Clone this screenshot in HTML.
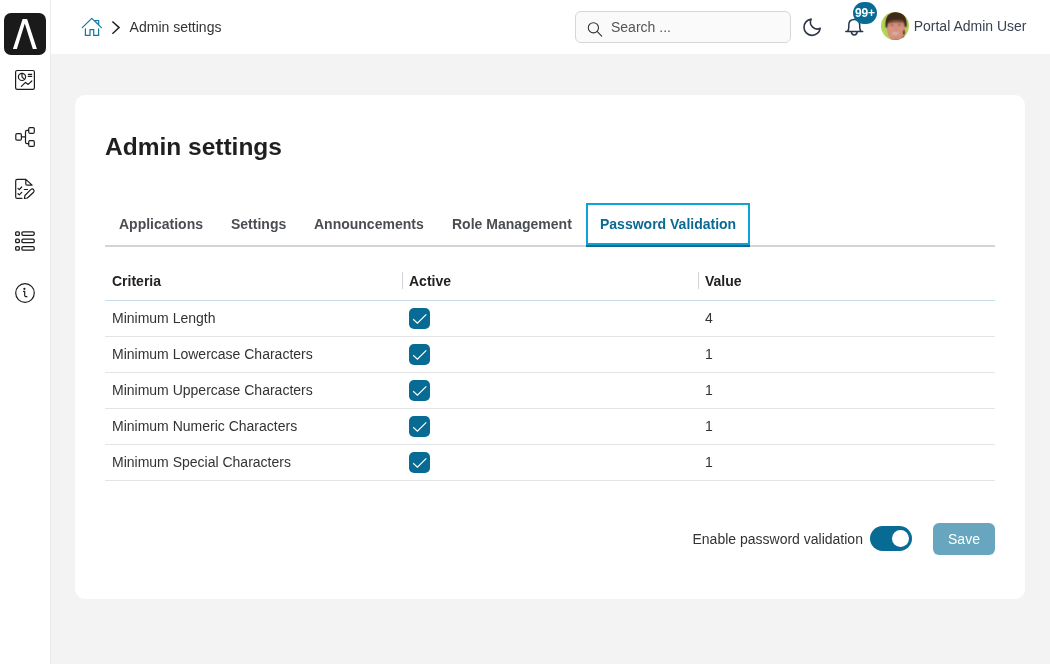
<!DOCTYPE html>
<html><head><meta charset="utf-8">
<style>
*{box-sizing:border-box;margin:0;padding:0}
html,body{width:1050px;height:664px;overflow:hidden;background:#f3f3f3;font-family:"Liberation Sans",sans-serif;color:#333}
#wrap{position:absolute;left:0;top:0;width:1050px;height:664px;will-change:transform}
#top{position:absolute;left:0;top:0;width:1050px;height:54px;background:#fff}
#side{position:absolute;left:0;top:0;width:51px;height:664px;background:#fff;border-right:1px solid #ebebeb}
#logo{position:absolute;left:4px;top:13px;width:42px;height:42px;border-radius:7px;background:#1a1a1a}
#icons{position:absolute;left:0;top:0;width:1050px;height:664px;pointer-events:none}
#crumb{position:absolute;left:129.6px;top:19px;font-size:14px;color:#333;white-space:nowrap}
#search{position:absolute;left:575px;top:11px;width:216px;height:32px;border:1px solid #d3d6da;border-radius:6px;background:#fafafa}
#search span{position:absolute;left:35px;top:7px;font-size:14px;color:#555;white-space:nowrap}
#user{position:absolute;left:913.7px;top:18px;font-size:14px;color:#394252;white-space:nowrap}
#badge{z-index:5;position:absolute;left:853px;top:2px;width:24px;height:22px;border-radius:11px;background:#076b94;color:#fff;font-size:12px;font-weight:bold;text-align:center;line-height:22px;letter-spacing:-0.15px}
#card{position:absolute;left:75px;top:95px;width:950px;height:504px;background:#fff;border-radius:10px}
h1{position:absolute;left:30px;top:38px;font-size:24.5px;font-weight:bold;color:#1f1f1f;white-space:nowrap}
#tabs{position:absolute;left:30px;top:108px;width:890px;height:44px;border-bottom:2px solid #d2d4d9}
.tab{position:absolute;top:13px;font-size:14px;font-weight:bold;color:#4a4d52;white-space:nowrap}
#atab{position:absolute;left:481px;top:0;width:164px;height:44px;border-bottom:2px solid #0b6a93}
#atab b{position:absolute;left:0;top:0;width:164px;height:42px;border:2px solid #0ea2d8}
#atab span{position:absolute;left:14px;top:13px;font-size:14px;font-weight:bold;color:#0b6a93;white-space:nowrap}
table{position:absolute;left:30px;top:167px;width:890px;border-collapse:collapse;table-layout:fixed}
th{height:38px;text-align:left;font-size:14px;font-weight:bold;color:#222;padding-left:7px;border-bottom:1px solid #c5dfea;position:relative}
td{height:36px;font-size:14px;color:#333;padding-left:7px;border-bottom:1px solid #e4e4e4;vertical-align:middle}
th i{position:absolute;left:0;top:10px;width:1px;height:17px;background:#d0d4d9}
.cb{display:block;width:21px;height:21px;border-radius:5px;background:#076b94;position:relative;left:0}
.cb svg{position:absolute;left:0;top:0}
#lbl{position:absolute;left:617.5px;top:436px;font-size:14px;color:#333;white-space:nowrap}
#tog{position:absolute;left:795px;top:431px;width:42px;height:25px;border-radius:13px;background:#076b94}
#tog i{position:absolute;left:21.5px;top:3.8px;width:17.5px;height:17.5px;border-radius:50%;background:#fff}
#save{position:absolute;left:858px;top:428px;width:62px;height:32px;border-radius:6px;background:#68a6bf;color:#fff;font-size:14px;text-align:center;line-height:32px}
</style></head><body>
<div id="wrap">
<div id="top">
<div id="crumb">Admin settings</div>
<div id="search"><span>Search ...</span></div>
<div id="badge">99+</div>
<div id="user">Portal Admin User</div>
</div>
<div id="side">
<div id="logo"><svg width="42" height="42" viewBox="0 0 42 42"><polygon points="8.9,36 18.6,6 23.1,6 32.9,36 28.8,36 20.8,10.6 12.9,36" fill="#fff"/></svg></div>
</div>
<div id="card">
<h1>Admin settings</h1>
<div id="tabs">
<span class="tab" style="left:14px">Applications</span>
<span class="tab" style="left:126px">Settings</span>
<span class="tab" style="left:209px">Announcements</span>
<span class="tab" style="left:347px">Role Management</span>
<div id="atab"><b></b><span>Password Validation</span></div>
</div>
<table>
<colgroup><col style="width:297px"><col style="width:296px"><col></colgroup>
<tr><th>Criteria</th><th><i></i>Active</th><th><i></i>Value</th></tr>
<tr><td>Minimum Length</td><td><span class="cb"><svg width="21" height="21"><path d="M4.2 11.3 L8.4 15.2 L17.3 6.4" fill="none" stroke="#fff" stroke-width="1.2"/></svg></span></td><td>4</td></tr>
<tr><td>Minimum Lowercase Characters</td><td><span class="cb"><svg width="21" height="21"><path d="M4.2 11.3 L8.4 15.2 L17.3 6.4" fill="none" stroke="#fff" stroke-width="1.2"/></svg></span></td><td>1</td></tr>
<tr><td>Minimum Uppercase Characters</td><td><span class="cb"><svg width="21" height="21"><path d="M4.2 11.3 L8.4 15.2 L17.3 6.4" fill="none" stroke="#fff" stroke-width="1.2"/></svg></span></td><td>1</td></tr>
<tr><td>Minimum Numeric Characters</td><td><span class="cb"><svg width="21" height="21"><path d="M4.2 11.3 L8.4 15.2 L17.3 6.4" fill="none" stroke="#fff" stroke-width="1.2"/></svg></span></td><td>1</td></tr>
<tr><td>Minimum Special Characters</td><td><span class="cb"><svg width="21" height="21"><path d="M4.2 11.3 L8.4 15.2 L17.3 6.4" fill="none" stroke="#fff" stroke-width="1.2"/></svg></span></td><td>1</td></tr>
</table>
<div id="lbl">Enable password validation</div>
<div id="tog"><i></i></div>
<div id="save">Save</div>
</div>
<svg id="icons" width="1050" height="664" viewBox="0 0 1050 664" fill="none" stroke-linecap="round" stroke-linejoin="round">
<!-- home -->
<g stroke="#0e7aa3" stroke-width="1.2">
<path d="M82.3 27.6 L91.75 18.4 L101.4 27.6"/>
<path d="M85.4 28.8 V35.4 H90 V29.6 H93.7 V35.4 H98.6 V28.8" stroke-linejoin="miter"/>
<path d="M94.9 20.5 H98.7 V24.6" /><path d="M96.2 21.6 L97.9 23.6" stroke-width="0.8"/>
</g>
<path d="M112.4 21.5 L119.1 27.6 L112.4 33.8" stroke="#222" stroke-width="1.5" stroke-linecap="butt" stroke-linejoin="miter"/>
<!-- sidebar icons -->
<g stroke="#1c1c1c" stroke-width="1.2">
<rect x="15.6" y="70.5" width="18.8" height="18.8" rx="1.6"/>
<circle cx="22" cy="76.9" r="3.6"/>
<path d="M22 73.3 V76.9 L24.6 79.4"/>
<path d="M28.3 74.3 H31.7 M28.3 76.4 H31.7"/>
<path d="M21.4 86.4 L25.5 82.4 L28.2 84.4 L31.8 81"/>

<rect x="15.8" y="133.7" width="5.6" height="6.5" rx="1.2"/>
<rect x="28.7" y="127.6" width="5.6" height="5.7" rx="1.2"/>
<rect x="28.7" y="140.7" width="5.6" height="5.7" rx="1.2"/>
<path d="M21.6 136.9 H25.5 M28.6 130.4 H27 Q25.5 130.4 25.5 132 V142 Q25.5 143.6 27 143.6 H28.6"/>

<path d="M21.9 198.4 H17.2 Q15.7 198.4 15.7 196.9 V180.9 Q15.7 179.4 17.2 179.4 H25.8 L32.1 185.1 H27 Q25.8 185.1 25.8 183.9 V179.4"/>
<path d="M18 188.4 L19.3 189.6 L21.7 187 M18 193.7 L19.3 194.9 L21.7 192.3 M24.3 189.5 H27.6"/>
<path d="M24.4 198.5 L24.9 195.5 L31 189.4 Q32.4 188.3 33.6 189.6 Q34.7 190.9 33.6 192.2 L27.4 198 Z"/>

<g stroke-width="1.3">
<rect x="15.7" y="231.8" width="3.6" height="3.5" rx="0.9"/><rect x="21.9" y="231.8" width="12.3" height="3.5" rx="1.3"/>
<rect x="15.7" y="239.2" width="3.6" height="3.5" rx="0.9"/><rect x="21.9" y="239.2" width="12.3" height="3.5" rx="1.3"/>
<rect x="15.7" y="246.7" width="3.6" height="3.5" rx="0.9"/><rect x="21.9" y="246.7" width="12.3" height="3.5" rx="1.3"/>
</g>

<circle cx="25" cy="293" r="9.3"/>
<path d="M23.5 291.4 H24.7 V295.3 Q24.7 296.8 26.9 296.7"/>
<circle cx="24.4" cy="288.8" r="0.5" fill="#1c1c1c"/>
</g>
<!-- search -->
<g stroke="#333" stroke-width="1.1">
<circle cx="593.4" cy="27.8" r="5.1"/>
<path d="M597.3 31.6 L601.7 36.2"/>
</g>
<!-- moon / bell -->
<g stroke="#2d3648" stroke-width="1.6">
<path d="M811.2 19.1 A8.15 8.15 0 1 0 820.2 28.3 A6.8 6.8 0 0 1 811.2 19.1 Z"/>
</g>
<g stroke="#2d3648" stroke-width="1.5">
<path d="M845.8 31.5 H862.7 M847.6 31.3 Q848.8 29.6 848.8 27 V25 Q848.8 19.4 854.2 19.4 Q859.7 19.4 859.7 25 V27 Q859.7 29.6 860.9 31.3"/>
<path d="M851.4 32.2 Q851.7 34.9 854.2 34.9 Q856.8 34.9 857.1 32.2"/>
</g>
<!-- avatar -->
<defs><clipPath id="av"><circle cx="895" cy="26" r="14"/></clipPath><filter id="bl"><feGaussianBlur stdDeviation="0.8"/></filter></defs>
<g clip-path="url(#av)" stroke="none">
<rect x="880" y="11" width="30" height="30" fill="#b3d659"/>
<g>
<path d="M886.5 26 Q886 20 890 17 L902 17 Q906 20 905.5 27 L904.5 33 Q903 38 899 40.5 L892 41 Q888.5 37 887.5 32 Z" fill="#d4917c"/>
<path d="M890 41.5 Q895 38.5 901 40 L903 36 L906 36 L904 42 Z" fill="#8a5a44"/>
<path d="M885.8 27.5 Q884.8 19 888.5 15 Q892 11.8 896 12.2 Q902 12.5 905 17 Q907.3 21.5 906.3 27.5 L904.3 26 Q903.8 22.5 902 20.8 Q898 21.6 894.5 21.3 Q891 21.6 889 22.2 Q887.6 24.5 887.3 27.5 Z" fill="#402b1c"/>
<path d="M889 22.2 Q892 19.5 896 20 Q900 19.6 902.5 21 L902 23 Q896 22 889.5 23.6 Z" fill="#7a5136"/>
<ellipse cx="892" cy="25.2" rx="1.6" ry="0.7" fill="#7b5b55"/>
<ellipse cx="899.3" cy="25" rx="1.6" ry="0.7" fill="#7b5b55"/>
<ellipse cx="891" cy="29" rx="2.2" ry="1.8" fill="#de9685"/>
<ellipse cx="900.5" cy="28.7" rx="2.2" ry="1.8" fill="#de9685"/>
<ellipse cx="895.3" cy="33.4" rx="3.6" ry="1.6" fill="#dcaea6"/>
<rect x="903" y="30.5" width="1.6" height="4" fill="#3b2a1d"/>
</g>
<g filter="url(#bl)" opacity="0.65">
<path d="M886.5 26 Q886 20 890 17 L902 17 Q906 20 905.5 27 L904.5 33 Q903 38 899 40.5 L892 41 Q888.5 37 887.5 32 Z" fill="#d4917c"/>
<path d="M890 41.5 Q895 38.5 901 40 L903 36 L906 36 L904 42 Z" fill="#8a5a44"/>
<path d="M885.8 27.5 Q884.8 19 888.5 15 Q892 11.8 896 12.2 Q902 12.5 905 17 Q907.3 21.5 906.3 27.5 L904.3 26 Q903.8 22.5 902 20.8 Q898 21.6 894.5 21.3 Q891 21.6 889 22.2 Q887.6 24.5 887.3 27.5 Z" fill="#402b1c"/>
<path d="M889 22.2 Q892 19.5 896 20 Q900 19.6 902.5 21 L902 23 Q896 22 889.5 23.6 Z" fill="#7a5136"/>
<ellipse cx="892" cy="25.2" rx="1.6" ry="0.7" fill="#7b5b55"/>
<ellipse cx="899.3" cy="25" rx="1.6" ry="0.7" fill="#7b5b55"/>
<ellipse cx="891" cy="29" rx="2.2" ry="1.8" fill="#de9685"/>
<ellipse cx="900.5" cy="28.7" rx="2.2" ry="1.8" fill="#de9685"/>
<ellipse cx="895.3" cy="33.4" rx="3.6" ry="1.6" fill="#dcaea6"/>
<rect x="903" y="30.5" width="1.6" height="4" fill="#3b2a1d"/>
</g>
</g>
</svg>
</div>
</body></html>
